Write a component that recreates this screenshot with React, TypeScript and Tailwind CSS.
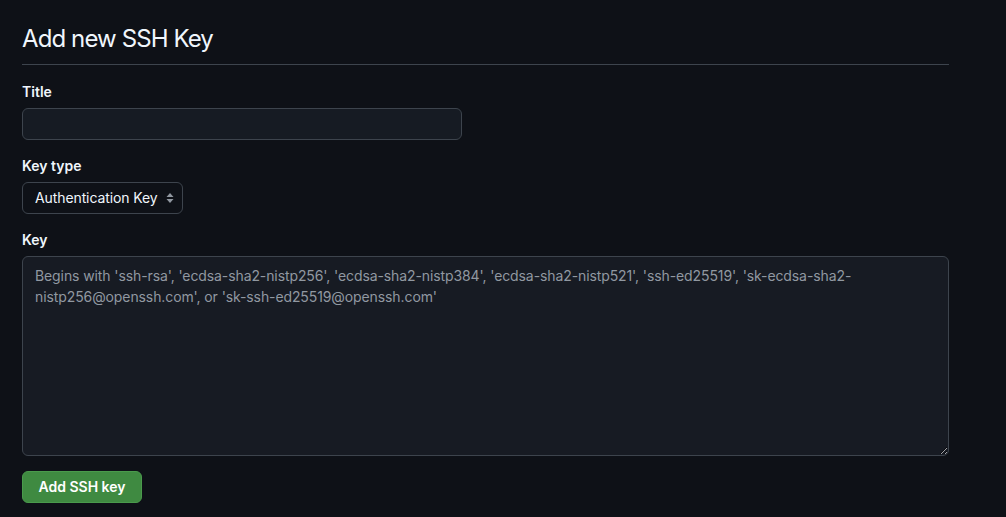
import { useState } from "react";

const PLACEHOLDER =
  "Begins with 'ssh-rsa', 'ecdsa-sha2-nistp256', 'ecdsa-sha2-nistp384', 'ecdsa-sha2-nistp521', 'ssh-ed25519', 'sk-ecdsa-sha2-nistp256@openssh.com', or 'sk-ssh-ed25519@openssh.com'";

function SelectArrows() {
  return (
    <svg width="8" height="12" viewBox="0 0 8 12" className="text-[#9198a1]" fill="currentColor">
      <path d="M4 1 7.5 5h-7z" />
      <path d="M4 11 0.5 7h7z" />
    </svg>
  );
}

export default function App() {
  const [title, setTitle] = useState("");
  const [keyType, setKeyType] = useState("authentication");
  const [key, setKey] = useState("");

  return (
    <div
      className="min-h-screen bg-[#0e1117] text-[#f0f6fc] [color-scheme:dark]"
      style={{ fontFamily: "Inter, 'Noto Sans', 'Liberation Sans', sans-serif" }}
    >
      <div className="w-[927px] ml-[22px] pt-[21px]">
        <div className="border-b border-[#3d444d] pb-[7px]">
          <h2 className="text-2xl leading-[36px] font-normal tracking-[-0.9px]">Add new SSH Key</h2>
        </div>

        <form className="flex flex-col pt-[17px]" onSubmit={(e) => e.preventDefault()}>
          <label className="text-sm leading-5 font-semibold mb-[6px]" htmlFor="title">
            Title
          </label>
          <input
            id="title"
            value={title}
            onChange={(e) => setTitle(e.target.value)}
            className="w-[440px] h-8 rounded-md border border-[#3d444d] bg-[#161b23] px-3 text-sm outline-none"
          />

          <label className="text-sm leading-5 font-semibold mt-4 mb-[6px]" htmlFor="type">
            Key type
          </label>
          <div className="relative w-[161px]">
            <select
              id="type"
              value={keyType}
              onChange={(e) => setKeyType(e.target.value)}
              className="w-full h-8 appearance-none rounded-md border border-[#3d444d] bg-[#0e1117] pl-3 pr-6 text-sm tracking-[-0.1px] text-[#f0f6fc] outline-none"
            >
              <option value="authentication">Authentication Key</option>
              <option value="signing">Signing Key</option>
            </select>
            <div className="pointer-events-none absolute right-[9px] top-[10px]">
              <SelectArrows />
            </div>
          </div>

          <label className="text-sm leading-5 font-semibold mt-4 mb-[6px]" htmlFor="key">
            Key
          </label>
          <textarea
            id="key"
            value={key}
            onChange={(e) => setKey(e.target.value)}
            placeholder={PLACEHOLDER}
            className="w-full h-[200px] rounded-md border border-[#3d444d] bg-[#171b23] px-3 py-2 text-sm leading-[21px] tracking-[-0.1px] outline-none placeholder:text-[#9198a1]"
          />

          <div className="mt-[15px]">
            <button
              type="submit"
              className="h-8 w-[120px] rounded-md border border-[#4a9a4c] bg-[#3f8a41] text-sm font-semibold text-white"
            >
              Add SSH key
            </button>
          </div>
        </form>
      </div>
    </div>
  );
}
